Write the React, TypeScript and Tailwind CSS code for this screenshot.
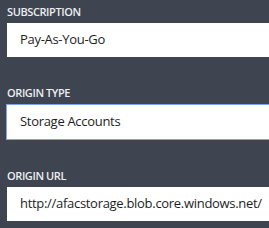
const fields = [
  { label: "SUBSCRIPTION", value: "Pay-As-You-Go", focused: false },
  { label: "ORIGIN TYPE", value: "Storage Accounts", focused: true },
  { label: "ORIGIN URL", value: "http://afacstorage.blob.core.windows.net/", focused: false },
];

export default function App() {
  return (
    <div
      className="w-[269px] h-[228px] overflow-hidden bg-[#3e4450] pl-[7px] pt-[4px]"
      style={{ fontFamily: '"Open Sans", "Noto Sans", sans-serif' }}
    >
      {fields.map((f) => (
        <div key={f.label} className="mb-[28px]">
          <div className="h-[15px] text-[11px] leading-[15px] font-semibold text-[#eceef0] tracking-[-0.4px]">
            {f.label}
          </div>
          <div
            className={
              f.focused
                ? "mt-[4px] -ml-[1px] h-[36px] w-[300px] bg-white border border-[#7aa5e8] flex items-center pl-[13px] text-[13px] text-[#1e1e1e] tracking-[-0.3px]"
                : "mt-[4px] h-[34px] w-[300px] bg-white flex items-center pl-[13px] text-[13px] text-[#1e1e1e] tracking-[-0.3px]"
            }
          >
            {f.value}
          </div>
        </div>
      ))}
    </div>
  );
}
